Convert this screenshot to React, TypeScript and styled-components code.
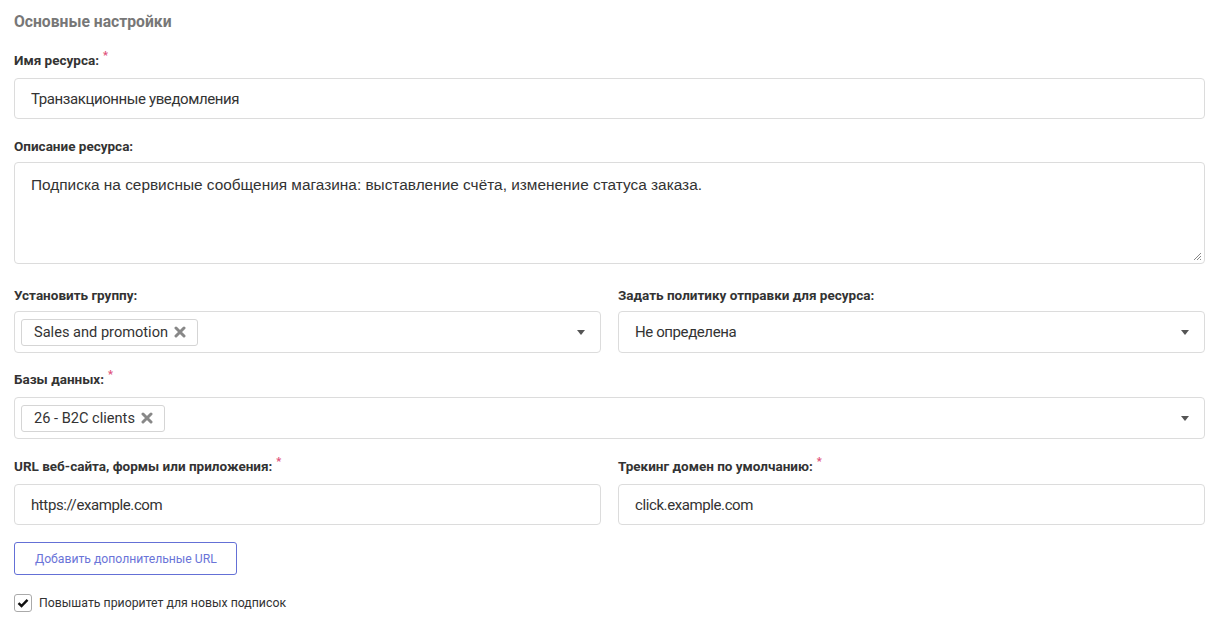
import React from "react";
import styled, { createGlobalStyle } from "styled-components";

const GlobalStyle = createGlobalStyle`
  html, body {
    margin: 0;
    padding: 0;
    background: #ffffff;
  }
  body {
    font-family: "Roboto", "Liberation Sans", sans-serif;
    color: #333333;
  }
`;

const Page = styled.div`
  padding: 12px 15px 0 14px;
`;

const SectionTitle = styled.h3`
  margin: 0 0 18px;
  font-size: 15.7px;
  line-height: 20px;
  font-weight: 700;
  color: #777777;
`;

const Row = styled.div`
  display: grid;
  grid-template-columns: 1fr 1fr;
  column-gap: 17px;
`;

const Field = styled.div<{ gap?: number }>`
  margin-bottom: ${({ gap }) => gap ?? 17}px;
`;

const Label = styled.label`
  display: block;
  margin-bottom: 6px;
  font-size: 13.5px;
  line-height: 20px;
  font-weight: 700;
  color: #333333;
`;

const Required = styled.span`
  position: relative;
  top: -6px;
  margin-left: 4px;
  font-size: 11px;
  color: #e0507a;
`;

const TextInput = styled.div`
  box-sizing: border-box;
  height: 41px;
  display: flex;
  align-items: center;
  padding: 0 16px;
  border: 1px solid #dcdcdc;
  border-radius: 4px;
  font-size: 15px;
  letter-spacing: -0.4px;
  color: #333333;
`;

const TextArea = styled.div`
  position: relative;
  box-sizing: border-box;
  height: 102px;
  margin-top: 3px;
  padding: 13px 16px;
  border: 1px solid #dcdcdc;
  border-radius: 4px;
  font-family: "Liberation Sans", Arial, sans-serif;
  font-size: 15.4px;
  line-height: 18px;
  color: #333333;
`;

const Grip = styled.svg`
  position: absolute;
  right: 2px;
  bottom: 2px;
`;

const Select = styled.div`
  box-sizing: border-box;
  height: 42px;
  margin-top: 1px;
  display: flex;
  align-items: center;
  padding: 0 15px 0 6px;
  border: 1px solid #dcdcdc;
  border-radius: 4px;
`;

const SelectValue = styled.div<{ plain?: boolean }>`
  flex: 1;
  display: flex;
  align-items: center;
  padding-left: ${({ plain }) => (plain ? "10px" : "0")};
  font-size: 15px;
  letter-spacing: ${({ plain }) => (plain ? "-0.4px" : "0")};
  color: #333333;
`;

const Tag = styled.span`
  display: inline-flex;
  align-items: center;
  gap: 6px;
  box-sizing: border-box;
  height: 27px;
  padding: 0 11px 0 12px;
  border: 1px solid #d5d5d5;
  border-radius: 3px;
  font-size: 14.6px;
  color: #333333;
`;

const Caret = styled.span`
  width: 0;
  height: 0;
  border-left: 4.5px solid transparent;
  border-right: 4.5px solid transparent;
  border-top: 5px solid #555555;
`;

const OutlineButton = styled.button`
  box-sizing: border-box;
  height: 33px;
  padding: 0 19px 0 20px;
  margin: 0 0 19px;
  border: 1px solid #6470d6;
  border-radius: 3px;
  background: #ffffff;
  font-family: inherit;
  font-size: 12.2px;
  color: #6a74d8;
  cursor: pointer;
`;

const CheckRow = styled.label`
  display: flex;
  align-items: center;
  gap: 7px;
  font-size: 12.3px;
  color: #333333;
`;

const Box = styled.span`
  box-sizing: border-box;
  width: 18px;
  height: 18px;
  display: flex;
  align-items: center;
  justify-content: center;
  border: 1px solid #aaaaaa;
  border-radius: 3px;
`;

function Remove() {
  return (
    <svg width="12" height="12" viewBox="0 0 12 12">
      <path d="M2 2 L10 10 M10 2 L2 10" stroke="#888" strokeWidth="3" strokeLinecap="round" />
    </svg>
  );
}

export default function App() {
  return (
    <Page>
      <GlobalStyle />
      <SectionTitle>Основные настройки</SectionTitle>

      <Field>
        <Label>
          Имя ресурса:<Required>*</Required>
        </Label>
        <TextInput>Транзакционные уведомления</TextInput>
      </Field>

      <Field gap={21}>
        <Label>Описание ресурса:</Label>
        <TextArea>
          Подписка на сервисные сообщения магазина: выставление счёта, изменение статуса заказа.
          <Grip width="10" height="10" viewBox="0 0 10 10">
            <path d="M9 2 L2 9 M9 5 L5 9 M9 8 L8 9" stroke="#888" strokeWidth="1" />
          </Grip>
        </TextArea>
      </Field>

      <Row>
        <Field gap={16}>
          <Label>Установить группу:</Label>
          <Select>
            <SelectValue>
              <Tag>
                Sales and promotion <Remove />
              </Tag>
            </SelectValue>
            <Caret />
          </Select>
        </Field>
        <Field gap={16}>
          <Label>Задать политику отправки для ресурса:</Label>
          <Select>
            <SelectValue plain>Не определена</SelectValue>
            <Caret />
          </Select>
        </Field>
      </Row>

      <Field>
        <Label>
          Базы данных:<Required>*</Required>
        </Label>
        <Select>
          <SelectValue>
            <Tag>
              26 - B2C clients <Remove />
            </Tag>
          </SelectValue>
          <Caret />
        </Select>
      </Field>

      <Row>
        <Field>
          <Label>
            URL веб-сайта, формы или приложения:<Required>*</Required>
          </Label>
          <TextInput>https://example.com</TextInput>
        </Field>
        <Field>
          <Label>
            Трекинг домен по умолчанию:<Required>*</Required>
          </Label>
          <TextInput>click.example.com</TextInput>
        </Field>
      </Row>

      <OutlineButton>Добавить дополнительные URL</OutlineButton>

      <CheckRow>
        <Box>
          <svg width="12" height="10" viewBox="0 0 12 10">
            <path d="M1.5 5.2 L4.5 8 L10.5 1.8" fill="none" stroke="#111" strokeWidth="2.4" />
          </svg>
        </Box>
        Повышать приоритет для новых подписок
      </CheckRow>
    </Page>
  );
}
